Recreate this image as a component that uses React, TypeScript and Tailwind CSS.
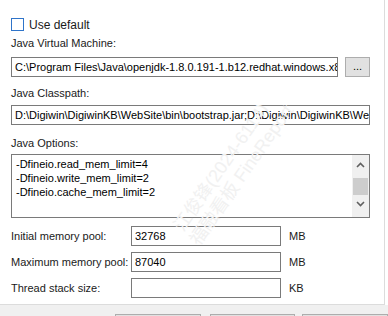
import React from "react";

const font = { fontFamily: '"Liberation Sans", Arial, "Noto Sans CJK SC", sans-serif' };

function Field({ label, value, unit }: { label: string; value: string; unit: string }) {
  return (
    <div className="flex items-center h-[20px]">
      <div className="w-[120px] text-[11px] leading-[14px] whitespace-nowrap text-[#1a1a1a]">{label}</div>
      <div className="w-[150px] h-[20px] border border-[#7a7a7a] bg-white px-[3px] text-[11px] leading-[18px] text-black">{value}</div>
      <div className="ml-[8px] text-[11px] leading-[14px] text-[#1a1a1a]">{unit}</div>
    </div>
  );
}

export default function App() {
  return (
    <div className="relative w-[388px] h-[316px] bg-white overflow-hidden" style={font}>
      <div className="w-[385px] h-[305px] border-r border-b border-[#dcdcdc] pl-[11px] pt-[18px] text-[11px] text-[#1a1a1a]">
        <div className="flex items-center h-[13px]">
          <div className="w-[13px] h-[13px] border border-[#2f74c9] bg-white" />
          <span className="ml-[5px] text-[12px] leading-[14px]">Use default</span>
        </div>
        <div className="mt-[5px] h-[14px] leading-[14px]">Java Virtual Machine:</div>
        <div className="mt-[7px] flex items-center">
          <div className="w-[327px] h-[20px] border border-[#7a7a7a] px-[3px] leading-[18px] whitespace-nowrap overflow-hidden text-black">
            C:\Program Files\Java\openjdk-1.8.0.191-1.b12.redhat.windows.x86_64\bin\java.exe
          </div>
          <div className="ml-[7px] w-[25px] h-[20px] border border-[#adadad] bg-[#e1e1e1] flex items-center justify-center text-black leading-none pb-[2px]">
            ...
          </div>
        </div>
        <div className="mt-[9px] h-[14px] leading-[14px]">Java Classpath:</div>
        <div className="mt-[5px] w-[359px] h-[20px] border border-[#7a7a7a] px-[3px] leading-[18px] whitespace-nowrap overflow-hidden text-black">
          D:\Digiwin\DigiwinKB\WebSite\bin\bootstrap.jar;D:\Digiwin\DigiwinKB\WebSite\lib\tomcat-juli.jar
        </div>
        <div className="mt-[11px] h-[14px] leading-[14px]">Java Options:</div>
        <div className="mt-[4px] w-[359px] h-[64px] border border-[#7a7a7a] flex">
          <div className="flex-1 pl-[4px] pt-[2px] leading-[14px] text-black">
            <div>-Dfineio.read_mem_limit=4</div>
            <div>-Dfineio.write_mem_limit=2</div>
            <div>-Dfineio.cache_mem_limit=2</div>
          </div>
          <div className="w-[17px] bg-[#f0f0f0] flex flex-col items-center">
            <svg width="9" height="6" viewBox="0 0 9 6" className="mt-[7px]">
              <path d="M1 5 L4.5 1.5 L8 5" stroke="#606060" strokeWidth="1.6" fill="none" />
            </svg>
            <div className="mt-[10px] w-[15px] h-[17px] bg-[#cdcdcd]" />
            <svg width="9" height="6" viewBox="0 0 9 6" className="mt-[6px]">
              <path d="M1 1 L4.5 4.5 L8 1" stroke="#606060" strokeWidth="1.6" fill="none" />
            </svg>
          </div>
        </div>
        <div className="mt-[8px] flex flex-col gap-[6px]">
          <Field label="Initial memory pool:" value="32768" unit="MB" />
          <Field label="Maximum memory pool:" value="87040" unit="MB" />
          <Field label="Thread stack size:" value="" unit="KB" />
        </div>
      </div>
      <div className="h-[11px] bg-[#f0f0f0] flex pt-[9px]">
        <div className="ml-[115px] w-[86px] h-[10px] border border-[#adadad] bg-[#e1e1e1]" />
        <div className="ml-[9px] w-[86px] h-[10px] border border-[#adadad] bg-[#e1e1e1]" />
        <div className="ml-[7px] w-[86px] h-[10px] border border-[#adadad] bg-[#e1e1e1]" />
      </div>
      <div className="absolute left-[178px] top-[218px] pointer-events-none select-none text-[#f1f1f1] text-[18px] leading-[22px] whitespace-nowrap origin-left -rotate-[55deg]">
        江俊锋(2024-6114)
      </div>
      <div className="absolute left-[194px] top-[232px] pointer-events-none select-none text-[#f1f1f1] text-[18px] leading-[22px] whitespace-nowrap origin-left -rotate-[55deg]">
        福融看板 FineReport
      </div>
    </div>
  );
}
